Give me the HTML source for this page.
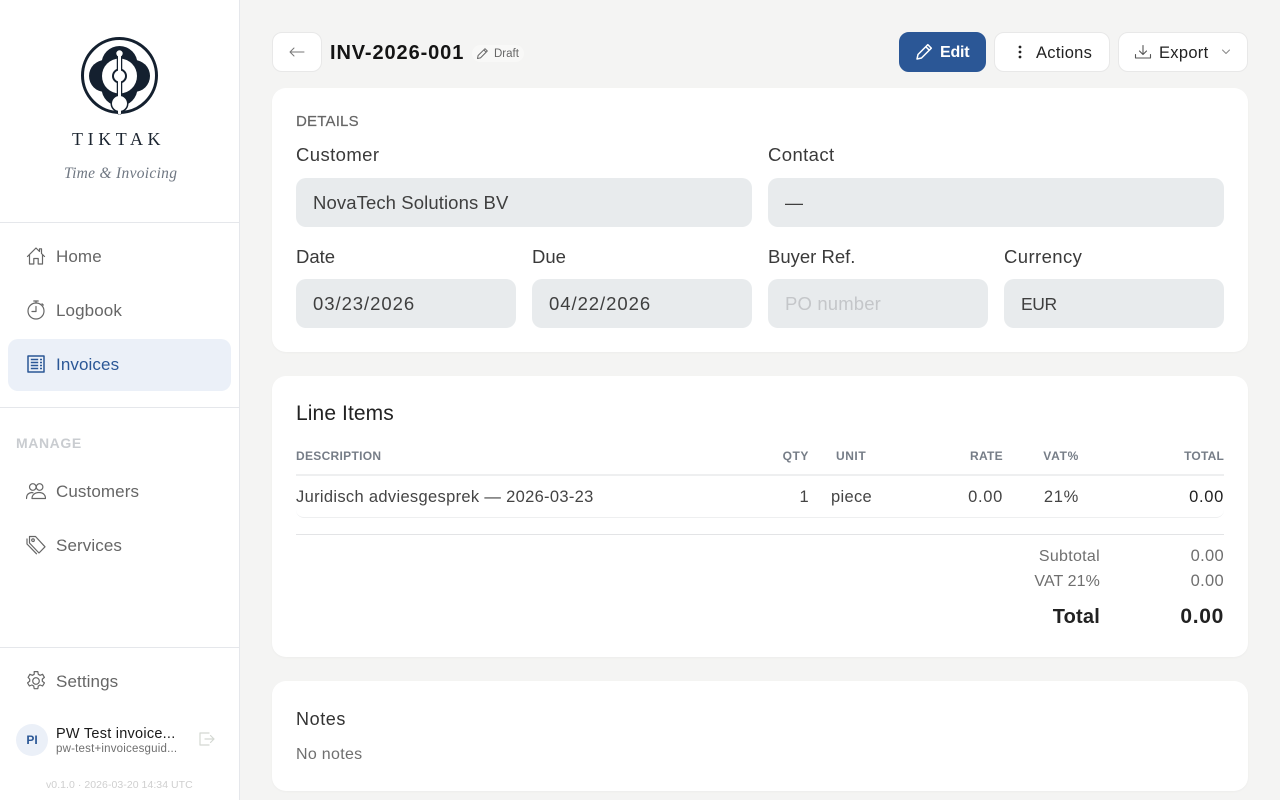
<!DOCTYPE html>
<html lang="en">
<head>
<meta charset="utf-8">
<title>TIKTAK - INV-2026-001</title>
<style>
*{box-sizing:border-box}
html,body{margin:0;padding:0;width:1280px;height:800px;overflow:hidden;background:#f4f4f3;font-family:"Liberation Sans",sans-serif}
.t{position:absolute;white-space:nowrap;line-height:20px;height:20px}
.r{text-align:right}
.sidebar{position:absolute;left:0;top:0;width:240px;height:800px;background:#fff;border-right:1px solid #e5e7eb}
.hr{position:absolute;left:0;width:239px;height:1px;background:#e5e7eb}
.active{position:absolute;left:8px;top:339px;width:223px;height:52px;background:#ebf0f8;border-radius:10px}
.nav{font-size:17px;color:#666;letter-spacing:.1px;left:56px}
.ic{position:absolute;fill:none;stroke:#666;stroke-width:1.2;stroke-linecap:round;stroke-linejoin:round}
.card{position:absolute;left:272px;width:976px;background:#fff;border-radius:14px;box-shadow:0 1px 2px rgba(0,0,0,.03)}
.btn{position:absolute;top:32px;height:40px;background:#fff;border:1px solid #e8e8e8;border-radius:10px}
.lab{font-size:18.5px;color:#3a3a3a;letter-spacing:.4px}
.inp{position:absolute;height:49px;background:#e8ebed;border-radius:10px}
.val{font-size:18.5px;color:#3f3f3f;letter-spacing:.1px}
.th{font-size:12px;font-weight:bold;color:#767d87;letter-spacing:.3px}
.td{font-size:16.5px;color:#444;letter-spacing:.32px}
.num{letter-spacing:.7px}
.sum{font-size:16px;color:#6f6f6f;letter-spacing:.3px}
.sum.num{font-size:16.5px}
</style>
</head>
<body>
<div class="sidebar"></div>

<svg style="position:absolute;left:70px;top:27px" width="100" height="100" viewBox="70 27 100 100">
  <circle cx="119.500" cy="75.500" r="37" fill="none" stroke="#14202f" stroke-width="3"/>
  <g fill="#14202f">
    <circle cx="119.500" cy="64" r="18"/>
    <circle cx="105" cy="76" r="16"/>
    <circle cx="134" cy="76" r="16"/>
    <circle cx="119.500" cy="88" r="18"/>
  </g>
  <circle cx="119.500" cy="76" r="17.500" fill="#fff"/>
  <path d="M119.500 53V112" stroke="#14202f" stroke-width="5.500" stroke-linecap="round"/>
  <circle cx="119.500" cy="76" r="7.500" fill="#14202f"/>
  <circle cx="119.500" cy="103.500" r="9" fill="#14202f"/>
  <path d="M119.500 53V113" stroke="#fff" stroke-width="3" stroke-linecap="round"/>
  <circle cx="119.500" cy="53.500" r="3.200" fill="#fff"/>
  <circle cx="119.500" cy="76" r="5.500" fill="#fff"/>
  <circle cx="119.500" cy="103.500" r="7.500" fill="#fff"/>
</svg>

<div class="t" style="left:72px;top:129px;font-family:'Liberation Serif',serif;font-size:18px;letter-spacing:4.600px;color:#1c2530">TIKTAK</div>
<div class="t" style="left:64px;top:164px;font-family:'Liberation Serif',serif;font-style:italic;font-size:15.500px;letter-spacing:.3px;color:#6f7782">Time &amp; Invoicing</div>

<div class="hr" style="top:222px"></div>
<div class="hr" style="top:407px"></div>
<div class="hr" style="top:647px"></div>
<div class="active"></div>

<svg class="ic" style="left:26px;top:246px" width="20" height="20" viewBox="0 0 20 20"><path d="M1.500 10.500 10 2l3.500 3.500V2.800h2v4.700l3 3M3.500 9v9h4.300v-5.500h4.400V18h4.300V9"/></svg>
<div class="t nav" style="top:247px">Home</div>

<svg class="ic" style="left:26px;top:300px" width="20" height="20" viewBox="0 0 20 20"><circle cx="10" cy="11" r="8"/><path d="M10 6.500V11.500H6M7.800 1h4.400M10 1v2M16 3.800l1.300 1.300"/></svg>
<div class="t nav" style="top:301px">Logbook</div>

<svg class="ic" style="left:26px;top:354px;stroke:#2b5796" width="20" height="20" viewBox="0 0 20 20"><path d="M2 2h16v16H2z" stroke-width="1.500" stroke-linecap="butt"/><path d="M4.800 5.500h7.400M4.800 8.500h7.400M4.800 11.500h7.400M4.800 14.500h7.400M14 5.500h2M14 8.500h2M14 11.500h2M14 14.500h2" stroke-width="1.500" stroke-linecap="butt"/></svg>
<div class="t nav" style="top:355px;color:#2b5796">Invoices</div>

<div class="t" style="left:16px;top:433px;font-size:14px;font-weight:bold;letter-spacing:.6px;color:#c9ccd0">MANAGE</div>

<svg class="ic" style="left:26px;top:481px" width="20" height="20" viewBox="0 0 20 20"><circle cx="6.800" cy="6" r="3.300"/><circle cx="13.600" cy="6" r="3.300"/><path d="M.5 17.500c0-3 1.500-5.500 5-6 .8 0 1.300.2 1.500.3M6 17.500c0-3.500 2.800-6 7-6s6.500 2.500 6.500 6z"/></svg>
<div class="t nav" style="top:482px">Customers</div>

<svg class="ic" style="left:26px;top:535px" width="20" height="20" viewBox="0 0 20 20"><path d="M3.500 1.500h6l9.500 10.300L13 18 3.500 8z"/><circle cx="7" cy="5.200" r="1.300"/><path d="M1 4v5l9.500 9.800"/></svg>
<div class="t nav" style="top:536px">Services</div>

<svg class="ic" style="left:26px;top:671px" width="20" height="20" viewBox="0 0 20 20"><circle cx="10" cy="10" r="3.300"/><path d="M8.200 .6h3.600l.5 2.700 1.800 1 2.500-1 1.800 3.100-2.100 1.700v2.100l2.100 1.700-1.800 3.100-2.500-1-1.800 1-.5 2.700H8.200l-.5-2.700-1.800-1-2.500 1-1.800-3.100 2.100-1.700V8.100L2.100 6.400l1.800-3.100 2.500 1 1.800-1z"/></svg>
<div class="t nav" style="top:672px">Settings</div>

<div style="position:absolute;left:16px;top:724px;width:32px;height:32px;border-radius:50%;background:#ebf0f8;color:#2b5796;font-size:12px;font-weight:bold;line-height:32px;text-align:center">PI</div>
<div class="t" style="left:56px;top:724px;font-size:14.500px;letter-spacing:.25px;color:#1a1a1a">PW Test invoice...</div>
<div class="t" style="left:56px;top:739px;font-size:11.500px;letter-spacing:.2px;color:#6f6f6f">pw-test+invoicesguid...</div>
<svg class="ic" style="left:198px;top:730px;stroke:#d4d8d2" width="18" height="18" viewBox="0 0 18 18"><path d="M11 3H2v12h9M7 9h9M12.500 5.500 16 9l-3.500 3.500"/></svg>
<div class="t" style="left:46px;top:775px;font-size:10.500px;letter-spacing:.05px;color:#cfcfcf">v0.1.0 · 2026-03-20 14:34 UTC</div>

<div class="btn" style="left:272px;width:50px"></div>
<svg class="ic" style="left:288px;top:44px;stroke:#777;stroke-width:1" width="18" height="16" viewBox="0 0 18 16"><path d="M16 8H2M6 4 2 8l4 4"/></svg>
<div class="t" style="left:330px;top:43px;font-size:20px;font-weight:bold;letter-spacing:.9px;color:#141414">INV-2026-001</div>
<div style="position:absolute;left:472px;top:45px;width:52px;height:17px;background:#f8f8f7;border-radius:9px"></div>
<svg class="ic" style="left:476px;top:47px;stroke:#666;stroke-width:1" width="13" height="13" viewBox="0 0 13 13"><path d="M1.500 11.500l.6-3L9 1.700l2.300 2.300-6.800 6.900zM7.800 2.900l2.300 2.300"/></svg>
<div class="t" style="left:494px;top:44px;font-size:11.500px;color:#666">Draft</div>

<div class="btn" style="left:899px;width:87px;background:#2b5796;border-color:#2b5796"></div>
<svg class="ic" style="left:915px;top:43px;stroke:#fff;stroke-width:1.500" width="18" height="18" viewBox="0 0 18 18"><path d="M2 16l1-4.500L12.800 1.700 16.300 5.200 6.500 15zM10.800 3.700l3.500 3.500"/></svg>
<div class="t" style="left:940px;top:43px;font-size:16px;font-weight:bold;letter-spacing:-.2px;color:#fff">Edit</div>

<div class="btn" style="left:994px;width:116px"></div>
<svg style="position:absolute;left:1014px;top:44px" width="12" height="16" viewBox="0 0 12 16"><g fill="#222"><circle cx="6" cy="3" r="1.400"/><circle cx="6" cy="8" r="1.400"/><circle cx="6" cy="13" r="1.400"/></g></svg>
<div class="t" style="left:1036px;top:43px;font-size:16.500px;letter-spacing:.3px;color:#222">Actions</div>

<div class="btn" style="left:1118px;width:130px"></div>
<svg class="ic" style="left:1134px;top:44px;stroke:#555;stroke-width:1.100" width="18" height="16" viewBox="0 0 18 16"><path d="M1.500 10.500V14H16.500V10.500M9 1.500V10.500M5.500 7 9 10.500 12.500 7"/></svg>
<div class="t" style="left:1159px;top:43px;font-size:16.500px;letter-spacing:.3px;color:#222">Export</div>
<svg class="ic" style="left:1220px;top:48px;stroke:#888;stroke-width:1" width="12" height="8" viewBox="0 0 12 8"><path d="M2.500 2 6 5.500 9.500 2"/></svg>

<div class="card" style="top:88px;height:264px"></div>
<div class="t" style="left:296px;top:112px;font-size:15px;letter-spacing:.2px;color:#666;-webkit-text-stroke:.2px #666">DETAILS</div>

<div class="t lab" style="left:296px;top:145px">Customer</div>
<div class="t lab" style="left:768px;top:145px">Contact</div>
<div class="inp" style="left:296px;top:178px;width:456px"></div>
<div class="inp" style="left:768px;top:178px;width:456px"></div>
<div class="t val" style="left:313px;top:193px">NovaTech Solutions BV</div>
<div class="t val" style="left:785px;top:193px;width:18px;overflow:hidden">—</div>

<div class="t lab" style="left:296px;top:247px;letter-spacing:0">Date</div>
<div class="t lab" style="left:532px;top:247px;letter-spacing:0">Due</div>
<div class="t lab" style="left:768px;top:247px;letter-spacing:0">Buyer Ref.</div>
<div class="t lab" style="left:1004px;top:247px">Currency</div>
<div class="inp" style="left:296px;top:279px;width:220px"></div>
<div class="inp" style="left:532px;top:279px;width:220px"></div>
<div class="inp" style="left:768px;top:279px;width:220px"></div>
<div class="inp" style="left:1004px;top:279px;width:220px"></div>
<div class="t val" style="left:313px;top:294px;letter-spacing:.95px">03/23/2026</div>
<div class="t val" style="left:549px;top:294px;letter-spacing:.95px">04/22/2026</div>
<div class="t val" style="left:785px;top:294px;color:#c4c6c9;letter-spacing:.15px">PO number</div>
<div class="t val" style="left:1021px;top:294px;font-size:17.500px;letter-spacing:-.4px">EUR</div>

<div class="card" style="top:376px;height:281px"></div>
<div class="t" style="left:296px;top:404px;font-size:21px;letter-spacing:.1px;color:#222">Line Items</div>
<div class="t th" style="left:296px;top:446px">DESCRIPTION</div>
<div class="t th r" style="right:471px;top:446px;letter-spacing:.55px">QTY</div>
<div class="t th" style="left:836px;top:446px;letter-spacing:.55px">UNIT</div>
<div class="t th r" style="right:277px;top:446px">RATE</div>
<div class="t th r" style="right:201px;top:446px;letter-spacing:.7px">VAT%</div>
<div class="t th r" style="right:56px;top:446px;letter-spacing:.2px">TOTAL</div>
<div style="position:absolute;left:296px;top:474px;width:928px;height:2px;background:#eeeff0"></div>
<div class="t td" style="left:296px;top:487px">Juridisch adviesgesprek — 2026-03-23</div>
<div class="t td r" style="right:471px;top:487px">1</div>
<div class="t td" style="left:831px;top:487px">piece</div>
<div class="t td r num" style="right:277px;top:487px">0.00</div>
<div class="t td r num" style="right:201px;top:487px">21%</div>
<div class="t td r num" style="right:56px;top:487px;color:#1f1f1f">0.00</div>
<div style="position:absolute;left:296px;top:510px;width:928px;height:8px;border-bottom:1px solid #eeeff0;border-radius:0 0 10px 10px"></div>
<div style="position:absolute;left:296px;top:534px;width:928px;height:1px;background:#e3e4e6"></div>

<div class="t sum r" style="right:180px;top:547px">Subtotal</div>
<div class="t sum r num" style="right:56px;top:546px">0.00</div>
<div class="t sum r" style="right:180px;top:572px;letter-spacing:.1px">VAT 21%</div>
<div class="t sum r num" style="right:56px;top:571px">0.00</div>
<div class="t r" style="right:180px;top:607px;font-size:20px;font-weight:bold;letter-spacing:.2px;color:#222">Total</div>
<div class="t r" style="right:56px;top:607px;font-size:21px;font-weight:bold;letter-spacing:.7px;color:#222">0.00</div>

<div class="card" style="top:681px;height:110px"></div>
<div class="t" style="left:296px;top:709px;font-size:18px;letter-spacing:.6px;color:#333">Notes</div>
<div class="t" style="left:296px;top:745px;font-size:16px;letter-spacing:.3px;color:#6f6f6f">No notes</div>
</body>
</html>
